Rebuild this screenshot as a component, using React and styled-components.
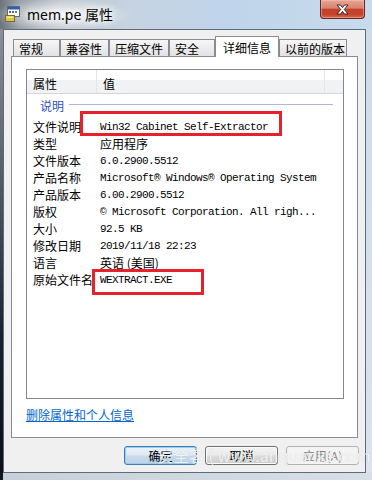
import React from 'react'
import styled, { createGlobalStyle } from 'styled-components'

const GlobalStyle = createGlobalStyle`
    html, body {
        margin:0;
        padding:0;
        background:#ffffff;
    }
`

const CJK = `"Noto Sans CJK SC", "Noto Sans", sans-serif`
const MONO = `"Liberation Mono", "Noto Sans CJK SC", monospace`

const tabs = ['常规', '兼容性', '压缩文件', '安全', '详细信息', '以前的版本']
const tabWidths = [47, 49, 60, 46, 64, 68]

const rows = [
    { name: '文件说明', value: 'Win32 Cabinet Self-Extractor', mono: true },
    { name: '类型', value: '应用程序' },
    { name: '文件版本', value: '6.0.2900.5512', mono: true },
    { name: '产品名称', value: 'Microsoft® Windows® Operating System', mono: true },
    { name: '产品版本', value: '6.00.2900.5512', mono: true },
    { name: '版权', value: '© Microsoft Corporation. All righ...', mono: true },
    { name: '大小', value: '92.5 KB', mono: true },
    { name: '修改日期', value: '2019/11/18 22:23', mono: true },
    { name: '语言', value: '英语 (美国)' },
    { name: '原始文件名', value: 'WEXTRACT.EXE', mono: true },
]

const AppIcon = () => (
    <svg width="16" height="16" viewBox="0 0 16 16">
        <rect x="2.5" y="0.5" width="12" height="10" fill="#ffffff" stroke="#5b6b82" />
        <rect x="3" y="1" width="11" height="2.5" fill="#2d5fb5" />
        <rect x="4" y="5" width="2" height="2" fill="#d23b2a" />
        <rect x="7" y="5" width="2" height="2" fill="#2f6fd0" />
        <rect x="10" y="5" width="2" height="2" fill="#3aa34a" />
        <rect x="0.5" y="9.5" width="9" height="6" fill="#d8c64a" stroke="#7b6e1c" />
        <rect x="1.5" y="10.5" width="7" height="1.5" fill="#f1e78c" />
    </svg>
)

const CloseGlyph = () => (
    <svg width="13" height="11" viewBox="0 0 13 11">
        <path d="M1 1 H4.5 L6.5 3.6 L8.5 1 H12 L8.3 5.5 L12 10 H8.5 L6.5 7.4 L4.5 10 H1 L4.7 5.5 Z"
            fill="#ffffff" stroke="#3a2a28" strokeWidth="1" strokeLinejoin="round" />
    </svg>
)

const App = () => {
    return (
        <>
            <GlobalStyle />
            <Frame>
                <TitleBar>
                    <IconBox><AppIcon /></IconBox>
                    <TitleText>mem.pe 属性</TitleText>
                    <CloseButton><CloseGlyph /></CloseButton>
                </TitleBar>
                <BodyRow>
                    <LeftEdge />
                    <Client>
                        <TabStrip>
                            {tabs.map((t, i) => (
                                <Tab key={t} $w={tabWidths[i]} $active={t === '详细信息'}>{t}</Tab>
                            ))}
                        </TabStrip>
                        <TabPanel>
                            <ListView>
                                <HeaderRow>
                                    <HeaderCell $w={70}>属性</HeaderCell>
                                    <HeaderCell $w={228}>值</HeaderCell>
                                    <HeaderCell $fill />
                                </HeaderRow>
                                <GroupRow>
                                    <GroupLabel>说明</GroupLabel>
                                    <GroupLine />
                                </GroupRow>
                                <Rows>
                                    {rows.map(r => (
                                        <Row key={r.name}>
                                            <PropName>{r.name}</PropName>
                                            <PropValue $mono={r.mono}>{r.value}</PropValue>
                                        </Row>
                                    ))}
                                </Rows>
                            </ListView>
                            <RemoveLink>删除属性和个人信息</RemoveLink>
                        </TabPanel>
                        <ButtonBar>
                            <DialogButton $default>确定</DialogButton>
                            <DialogButton>取消</DialogButton>
                            <DialogButton disabled>应用(A)</DialogButton>
                        </ButtonBar>
                    </Client>
                    <RightEdge />
                </BodyRow>
                <BottomEdge />
                <Highlight $x={80} $y={111} $w={202} $h={25} />
                <Highlight $x={92} $y={269} $w={112} $h={26} />
                <Watermark>安全客 ( www.anquanke.com )</Watermark>
            </Frame>
        </>
    )
}

const Frame = styled.div`
    position:relative;
    width:372px;
    height:480px;
    overflow:hidden;
    display:flex;
    flex-direction:column;
    background:#cdd8e4;
`
const TitleBar = styled.div`
    height:29px;
    display:flex;
    align-items:flex-start;
    background:
        radial-gradient(ellipse 70px 16px at 62px 15px, rgba(255,255,255,0.85), rgba(255,255,255,0) 100%),
        linear-gradient(to right, #6d737a 0px, #9aa2aa 18px, #c0c7ce 60px, #c6d3e1 130px, #bfd4ea 220px, #c8dbee 372px);
`
const IconBox = styled.div`
    width:16px;
    height:16px;
    margin:6px 0 0 5px;
`
const TitleText = styled.div`
    margin:5px 0 0 6px;
    font-family:"Noto Sans", "Noto Sans CJK SC", sans-serif;
    font-size:14px;
    line-height:19px;
    color:#000000;
    text-shadow:0 0 6px #ffffff, 0 0 10px #ffffff;
`
const CloseButton = styled.div`
    margin-left:auto;
    margin-right:7px;
    width:43px;
    height:18px;
    display:flex;
    align-items:center;
    justify-content:center;
    border:1px solid #5c2a22;
    border-top:none;
    border-radius:0 0 4px 4px;
    background:linear-gradient(#e7a696 0%, #d9826e 45%, #c44129 52%, #c5432c 80%, #d8684a 100%);
    box-shadow:inset 0 0 0 1px rgba(255,200,190,0.45);
`
const BodyRow = styled.div`
    flex:1;
    display:flex;
    min-height:0;
`
const LeftEdge = styled.div`
    width:3px;
    background:linear-gradient(#8a9097 0%, #4a525c 40%, #17202b 70%, #0c1117 100%);
`
const RightEdge = styled.div`
    width:6px;
    background:linear-gradient(#cfdbe8, #dbe3ec);
`
const BottomEdge = styled.div`
    height:7px;
    background:linear-gradient(to right, #121820 0px, #121820 3px, #c7d0da 3px, #d7dee6 100%);
`
const Client = styled.div`
    flex:1;
    display:flex;
    flex-direction:column;
    border:1px solid #5d6b7a;
    background:#f0f0f0;
    padding:6px 7px 0 7px;
`
const TabStrip = styled.div`
    height:20px;
    display:flex;
    align-items:flex-end;
    padding-left:2px;
    position:relative;
    z-index:1;
`
const Tab = styled.div`
    box-sizing:border-box;
    width:${p => p.$w}px;
    height:${p => p.$active ? 21 : 17}px;
    margin-bottom:${p => p.$active ? -1 : 0}px;
    padding-left:${p => p.$active ? 7 : 5}px;
    display:flex;
    align-items:center;
    border:1px solid #898c95;
    border-bottom:${p => p.$active ? 'none' : '0'};
    background:${p => p.$active ? '#ffffff' : 'linear-gradient(#f6f6f6, #e2e2e2)'};
    font-family:${CJK};
    font-size:12px;
    color:#000000;
    white-space:nowrap;
`
const TabPanel = styled.div`
    box-sizing:border-box;
    height:382px;
    border:1px solid #898c95;
    background:#ffffff;
    padding:12px 13px 0 14px;
`
const ListView = styled.div`
    box-sizing:border-box;
    height:330px;
    border:1px solid #828790;
    background:#ffffff;
    display:flex;
    flex-direction:column;
`
const HeaderRow = styled.div`
    height:23px;
    display:flex;
    border-bottom:1px solid #d5d5d5;
    background:linear-gradient(#ffffff 0%, #ffffff 45%, #f1f2f4 45%, #f1f2f4 100%);
`
const HeaderCell = styled.div`
    box-sizing:border-box;
    ${p => p.$fill ? 'flex:1;' : `width:${p.$w}px;`}
    padding:3px 0 0 6px;
    display:flex;
    align-items:center;
    border-right:${p => p.$fill ? 'none' : '1px solid #e3e5e8'};
    font-family:${CJK};
    font-size:12px;
    color:#000000;
`
const GroupRow = styled.div`
    height:22px;
    display:flex;
    align-items:center;
    padding:0 10px 0 13px;
`
const GroupLabel = styled.div`
    font-family:${CJK};
    font-size:12px;
    color:#2f4fc0;
    margin-right:5px;
`
const GroupLine = styled.div`
    flex:1;
    height:1px;
    margin-top:-2px;
    background:#aeb8dc;
`
const Rows = styled.div`
    padding-top:2px;
    display:flex;
    flex-direction:column;
`
const Row = styled.div`
    height:17px;
    display:flex;
    align-items:center;
`
const PropName = styled.div`
    width:67px;
    padding-left:6px;
    font-family:${CJK};
    font-size:12px;
    color:#000000;
    white-space:nowrap;
`
const PropValue = styled.div`
    font-family:${p => p.$mono ? MONO : CJK};
    font-size:${p => p.$mono ? 11 : 12}px;
    letter-spacing:${p => p.$mono ? '-0.6px' : '0'};
    color:#000000;
    white-space:nowrap;
`
const RemoveLink = styled.a`
    display:inline-block;
    margin-top:8px;
    font-family:${CJK};
    font-size:12px;
    line-height:16px;
    color:#0066cc;
    text-decoration:underline;
    cursor:pointer;
`
const ButtonBar = styled.div`
    display:flex;
    justify-content:flex-end;
    gap:8px;
    margin:8px -1px 0 0;
`
const DialogButton = styled.button`
    box-sizing:border-box;
    width:73px;
    height:19px;
    padding:0;
    border-radius:3px;
    font-family:${CJK};
    font-size:12px;
    line-height:17px;
    border:1px solid ${p => p.$default ? '#3c7fb1' : '#707070'};
    background:${p => p.$default
        ? 'linear-gradient(#eaf3fb 0%, #dde9f4 48%, #c9dbea 52%, #bcd2e6 100%)'
        : 'linear-gradient(#f2f2f2 0%, #ebebeb 48%, #dddddd 52%, #cfcfcf 100%)'};
    box-shadow:${p => p.$default ? 'inset 0 0 0 1px #9ccbee' : 'inset 0 0 0 1px #fbfbfb'};
    color:#000000;
    &:disabled {
        border-color:#adb2b5;
        background:#f4f4f4;
        box-shadow:none;
        color:#838383;
    }
`
const Highlight = styled.div`
    position:absolute;
    left:${p => p.$x}px;
    top:${p => p.$y}px;
    width:${p => p.$w}px;
    height:${p => p.$h}px;
    box-sizing:border-box;
    border:3px solid #e6212b;
    pointer-events:none;
`
const Watermark = styled.div`
    position:absolute;
    left:157px;
    top:445px;
    font-family:${CJK};
    font-size:16px;
    line-height:20px;
    color:rgba(255,255,255,0.82);
    text-shadow:0 0 1px rgba(120,120,120,0.35);
    white-space:nowrap;
    pointer-events:none;
`

export default App
